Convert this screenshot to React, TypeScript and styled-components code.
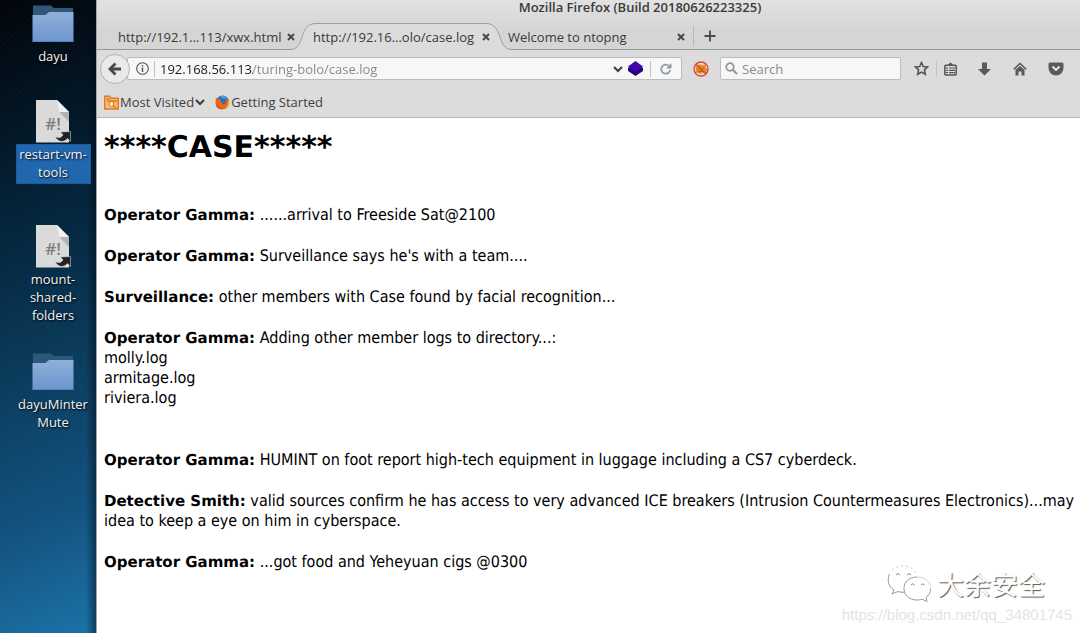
import React from "react";
import styled, { createGlobalStyle, css } from "styled-components";

const GlobalStyle = createGlobalStyle`
  * { box-sizing: border-box; }
  body { margin: 0; background: #fff; overflow: hidden; }
  button, input { font: inherit; color: inherit; }
  button { padding: 0; border: 0; background: none; }
  svg { display: block; flex: none; }
`;

const uiFont = `"Open Sans", "Noto Sans", sans-serif`;

const Screen = styled.div`
  display: grid;
  grid-template-columns: 96px minmax(0, 1fr);
  min-height: 100vh;
  font: 13px/18px ${uiFont};
`;

/* ---------- desktop ---------- */

const Desktop = styled.nav`
  display: grid;
  grid-template-rows: 98px;
  grid-auto-rows: 125px;
  justify-items: center;
  padding: 2px 0 0 10px;
  background:
    linear-gradient(90deg, transparent 86px, rgba(0, 10, 20, 0.5) 96px),
    repeating-linear-gradient(135deg, transparent 0 3px, rgba(255, 255, 255, 0.012) 3px 5px),
    linear-gradient(156deg, #01050a 0%, #021422 18%, #04263e 36%, #0b3e60 60%, #12527f 80%, #1b72a8 100%);
`;

const DesktopItem = styled.button`
  display: flex;
  flex-direction: column;
  align-items: center;
  align-self: start;
  gap: 1px;
  color: #f2f2f2;
`;

const IconSlot = styled.span`
  display: grid;
  place-items: center;
  height: 43px;
`;

const DesktopLabel = styled.span<{ $selected?: boolean }>`
  width: 75px;
  padding: 1px 0 3px;
  white-space: pre;
  text-align: center;
  display: flex;
  justify-content: center;
  text-shadow: 1px 1px 2px #000;
  ${(p) => p.$selected && css`
    background: #2067ae;
    box-shadow: inset 0 0 0 1px #1a5c9f;
  `}
`;

const FolderIcon = () => (
  <svg width="42" height="38" viewBox="0 0 42 38">
    <defs>
      <linearGradient id="folder" x1="0" y1="0" x2="0" y2="1">
        <stop offset="0" stopColor="#8fb0da" />
        <stop offset="1" stopColor="#6b96cd" />
      </linearGradient>
    </defs>
    <path d="M1 0.5h18l2.500 2.500H41V14H1z" fill="#2f5878" />
    <path d="M0.500 10h13l3.500-3H41.500V37H0.500z" fill="url(#folder)" />
    <path d="M0.500 36.500h41" stroke="#5783bb" />
  </svg>
);

const ScriptIcon = () => (
  <svg width="36" height="43" viewBox="0 0 36 43">
    <path d="M1 0h21l12 12v30.500H1z" fill="#dadada" />
    <path d="M22 0l12 12H24.500z" fill="#f2f2f2" />
    <path d="M24.500 12H34v10z" fill="#b2b2b2" />
    <text x="18" y="30" textAnchor="middle" fill="#7d7d7d" fontSize="17" fontWeight="600" fontFamily="Open Sans, sans-serif">#!</text>
    <path d="M20 36c3 2.500 6 2 8-1l-2.500-3 10-.5v10l-3-3c-4 4.500-10 4-12.500-2.500z" fill="#222" stroke="#e8e8e8" strokeWidth=".5" />
  </svg>
);

/* ---------- browser chrome ---------- */

const Browser = styled.main`
  display: flex;
  flex-direction: column;
  min-width: 0;
  overflow: hidden;
  border-left: 1px solid #9ea5ad;
  background: #fff;
`;

const WindowTop = styled.header`
  background: linear-gradient(#e2e2e2, #d5d5d5 30px);
  color: #3a3a3a;
`;

const TitleBar = styled.div`
  height: 23px;
  padding-left: 103px;
  text-align: center;
  font-weight: 600;
  line-height: 15px;
`;

const TabStrip = styled.div`
  display: flex;
  height: 27px;
  padding-left: 7px;
  border-bottom: 1px solid #999;
`;

const Tab = styled.div`
  position: relative;
  flex: 0 0 195px;
  height: 27px;
  display: flex;
  align-items: center;
  justify-content: space-between;
  padding: 0 3px 0 14px;
`;

const TabShape = styled.svg`
  position: absolute;
  left: -9px;
  top: 0;
`;

const TabName = styled.button`
  position: relative;
  white-space: nowrap;
`;

const TabClose = styled.button`
  position: relative;
  width: 10px;
  height: 18px;
  display: grid;
  place-items: center;
`;

const NewTab = styled.button`
  align-self: center;
  height: 20px;
  margin-left: 4px;
  padding-left: 10px;
  border-left: 1px solid #b9b9b9;
`;

const Toolbar = styled.div`
  display: flex;
  align-items: center;
  height: 37px;
  padding: 0 16px 0 3px;
  background: #dcdcdc;
  color: #555;
`;

const BackButton = styled.button`
  position: relative;
  width: 30px;
  height: 30px;
  flex: none;
  display: grid;
  place-items: center;
  border: 1px solid #b2b2b2;
  border-radius: 50%;
  background: #e9e9e9;
`;

const Field = styled.label<{ $grow?: boolean }>`
  display: flex;
  align-items: center;
  min-width: 0;
  height: 23px;
  border: 1px solid #bcbcbc;
  border-radius: 2px;
  background: #f7f7f7;
  ${(p) => p.$grow
    ? css`flex: 1; margin-left: -3px; padding: 0 5px 0 8px; gap: 5px;`
    : css`flex: 0 0 181px; padding: 0 4px; gap: 4px;`}
`;

const TextInput = styled.input`
  flex: 1;
  min-width: 0;
  height: 19px;
  padding: 0;
  border: 0;
  outline: 0;
  background: transparent;
  &::placeholder { color: #8c8c8c; opacity: 1; }
`;

/* The host part of the address is dark and the path is grey. */
const AddressInput = styled(TextInput)`
  background: linear-gradient(90deg, #1a1a1a 93px, #858585 93px);
  background-clip: text;
  -webkit-text-fill-color: transparent;
`;

const Divider = styled.span`
  width: 1px;
  height: 16px;
  flex: none;
  background: #c2c2c2;
`;

const IconButton = styled.button`
  display: grid;
  place-items: center;
  flex: none;
  height: 24px;
`;

const BlockerButton = styled(IconButton)`
  width: 38px;
`;

const Actions = styled.div`
  display: flex;
  align-items: center;
  justify-content: space-between;
  flex: 0 0 150px;
  margin-left: 13px;
`;

const ActionPair = styled.div`
  display: flex;
  align-items: center;
  gap: 7px;
`;

const Bookmarks = styled.div`
  display: flex;
  align-items: center;
  gap: 10px;
  height: 31px;
  padding: 0 7px;
  border-bottom: 1px solid #b8b8b8;
  background: #dcdcdc;
  color: #3e3e3e;
`;

const Bookmark = styled.button`
  display: flex;
  align-items: center;
  gap: 1px;
`;

const CloseGlyph = () => (
  <svg width="8" height="8" viewBox="0 0 8 8">
    <path d="M1 1l6 6M7 1L1 7" stroke="#484848" strokeWidth="2" />
  </svg>
);

const Chevron = () => (
  <svg width="10" height="10" viewBox="0 0 10 10">
    <path d="M1 3l4 4 4-4" fill="none" stroke="#3c3c3c" strokeWidth="2" />
  </svg>
);

const FirefoxIcon = () => (
  <svg width="15" height="15" viewBox="0 0 15 15">
    <circle cx="7.500" cy="7" r="6.500" fill="#2c6fb5" />
    <path d="M5 2c2-2 5-1.500 7 0l-3 2z" fill="#4aa3dc" />
    <path d="M.8 2.500L3 4l3 .3-1 2 3 1-1.500 1.500c1.500 1.500 4 .5 4.500-1.500.5-2-.5-3.500-1-4.500 3 1 4.500 4 4.500 5.500C14 12 11 14.500 7.500 14.500S.5 12 .5 8c0-2 .3-4 .3-5.500z" fill="#e9661a" />
    <path d="M14.300 6c.5 5-2.800 8.500-6.800 8.500 4-1 6-4 5.500-8.500z" fill="#fbbf2d" />
    <path d="M1.500 9c1 3 3 4.500 6 5-4 .5-6.500-2-6-5z" fill="#c63718" />
  </svg>
);

/* ---------- page ---------- */

const Page = styled.article`
  position: relative;
  flex: 1;
  padding: 12px 0 24px 7px;
  overflow: hidden;
  background: #fff;
  color: #000;
  font: 16px/20px "DejaVu Sans Condensed", "DejaVu Sans", sans-serif;
  text-rendering: geometricPrecision;
`;

const Heading = styled.h1`
  margin: 0 0 39px;
  font: 700 30px/36px "DejaVu Sans", sans-serif;
`;

const Entry = styled.div<{ $spaced?: boolean }>`
  margin: 0 0 ${(p) => (p.$spaced ? 42 : 21)}px;
`;

const Line = styled.p`
  height: 20px;
  margin: 0;
  white-space: nowrap;
`;

const Speaker = styled.b`
  font: 700 15px/20px "DejaVu Sans", sans-serif;
`;

const Watermark = styled.aside`
  position: absolute;
  right: 8px;
  bottom: 6px;
  display: flex;
  flex-direction: column;
  align-items: flex-end;
  color: #e4e4e4;
  font: 15px/22px "Liberation Sans", sans-serif;
`;

const Brand = styled.div`
  display: flex;
  align-items: center;
  gap: 6px;
  height: 42px;
  padding-right: 27px;
  color: #fff;
  font: 27px/36px "Noto Sans CJK SC", sans-serif;
  text-shadow: 1px 1px 1px #555;
`;

const entries = [
  { who: "Operator Gamma:", lines: ["......arrival to Freeside Sat@2100"] },
  { who: "Operator Gamma:", lines: ["Surveillance says he's with a team...."] },
  { who: "Surveillance:", lines: ["other members with Case found by facial recognition..."] },
  {
    who: "Operator Gamma:",
    lines: ["Adding other member logs to directory...:", "molly.log", "armitage.log", "riviera.log"],
    spaced: true,
  },
  { who: "Operator Gamma:", lines: ["HUMINT on foot report high-tech equipment in luggage including a CS7 cyberdeck."] },
  {
    who: "Detective Smith:",
    lines: [
      "valid sources confirm he has access to very advanced ICE breakers (Intrusion Countermeasures Electronics)...may",
      "idea to keep a eye on him in cyberspace.",
    ],
  },
  { who: "Operator Gamma:", lines: ["...got food and Yeheyuan cigs @0300"] },
];

const desktopItems = [
  { label: "dayu", folder: true },
  { label: "restart-vm-\ntools", selected: true },
  { label: "mount-\nshared-\nfolders" },
  { label: "dayuMinter\nMute", folder: true },
];

const tabs = [
  { name: "http://192.1…113/xwx.html" },
  { name: "http://192.16…olo/case.log", active: true },
  { name: "Welcome to ntopng" },
];

export default function App() {
  return (
    <Screen>
      <GlobalStyle />
      <Desktop aria-label="Desktop">
        {desktopItems.map((item) => (
          <DesktopItem key={item.label}>
            <IconSlot>{item.folder ? <FolderIcon /> : <ScriptIcon />}</IconSlot>
            <DesktopLabel $selected={item.selected}>{item.label}</DesktopLabel>
          </DesktopItem>
        ))}
      </Desktop>

      <Browser>
        <WindowTop>
          <TitleBar>Mozilla Firefox (Build 20180626223325)</TitleBar>
          <TabStrip>
            {tabs.map((tab) => (
              <Tab key={tab.name}>
                {tab.active && (
                  <TabShape width="226" height="27" viewBox="0 0 226 27">
                    <path d="M0 27V26.500C16 26.500 8 .5 26 .5H196C214 .5 206 26.500 222 26.500V27z" fill="#dcdcdc" />
                    <path d="M0 26.500C16 26.500 8 .5 26 .5H196C214 .5 206 26.500 222 26.500" fill="none" stroke="#999fa6" />
                  </TabShape>
                )}
                <TabName>{tab.name}</TabName>
                <TabClose aria-label="Close tab"><CloseGlyph /></TabClose>
              </Tab>
            ))}
            <NewTab aria-label="New tab">
              <svg width="12" height="12" viewBox="0 0 12 12">
                <path d="M6 0.500v11M0.500 6h11" stroke="#4a4a4a" strokeWidth="1.800" />
              </svg>
            </NewTab>
          </TabStrip>
        </WindowTop>

        <Toolbar>
          <BackButton aria-label="Back">
            <svg width="14" height="14" viewBox="0 0 14 14">
              <path d="M7.500 1.500L2 7l5.500 5.500M2.500 7H13" fill="none" stroke="#484848" strokeWidth="2.800" />
            </svg>
          </BackButton>
          <Field $grow>
            <svg width="13" height="13" viewBox="0 0 13 13">
              <circle cx="6.500" cy="6.500" r="5.800" fill="none" stroke="#555" strokeWidth="1.100" />
              <path d="M6.500 3v1.600M6.500 5.600v4.400" stroke="#555" strokeWidth="1.500" />
            </svg>
            <Divider />
            <AddressInput aria-label="Address" defaultValue="192.168.56.113/turing-bolo/case.log" />
            <Chevron />
            <svg width="17" height="15" viewBox="0 0 17 15">
              <path d="M7.500 2.500L15 7v3l-7.500 5L0 10V7z" fill="#25067a" />
              <path d="M7.500 0L15 5.500 7.500 11 0 5.500z" fill="#4405ad" />
            </svg>
            <Divider />
            <IconButton aria-label="Reload">
              <svg width="20" height="12" viewBox="0 0 20 12">
                <path d="M13 3a4.500 4.500 0 1 0 1.200 4" fill="none" stroke="#929ba5" strokeWidth="1.800" />
                <path d="M15.500 0v5.500H10z" fill="#929ba5" />
              </svg>
            </IconButton>
          </Field>
          <BlockerButton aria-label="Blocker">
            <svg width="16" height="16" viewBox="0 0 16 16">
              <path d="M2 4l3 1 2-2 2 1.500 4-1.500-.5 4 2 1-2 4-3-.5-2 1.500-3-1.500-2 .5.500-4z" fill="#ec8a12" />
              <path d="M5 9l2-2 2 1.500 2-2M5 11l3-1 3 1" fill="none" stroke="#a75b18" />
              <circle cx="8" cy="8" r="7" fill="none" stroke="#d9453f" strokeWidth="1.300" />
              <path d="M3 3l10 10" stroke="#d9453f" strokeWidth="1.300" />
            </svg>
          </BlockerButton>
          <Field>
            <svg width="13" height="13" viewBox="0 0 13 13">
              <circle cx="5" cy="5" r="3.800" fill="none" stroke="#959595" strokeWidth="1.700" />
              <path d="M8 8l4 4" stroke="#959595" strokeWidth="2.200" />
            </svg>
            <TextInput aria-label="Search" placeholder="Search" />
          </Field>
          <Actions>
            <ActionPair>
              <IconButton aria-label="Bookmark this page">
                <svg width="15" height="15" viewBox="0 0 15 15">
                  <path d="M7.500 1.500l1.800 4 4.300.5-3.200 2.900.9 4.400-3.800-2.200-3.800 2.200.9-4.400L1.400 6l4.300-.5z" fill="none" stroke="#555" strokeWidth="1.600" />
                </svg>
              </IconButton>
              <Divider />
              <IconButton aria-label="Library">
                <svg width="13" height="14" viewBox="0 0 13 14">
                  <path d="M3.500 3.500L6.500.3l3 3.200z" fill="#555" />
                  <rect x=".8" y="3.300" width="11.400" height="9.700" rx="1" fill="none" stroke="#555" strokeWidth="1.500" />
                  <path d="M2 6h2M5 6h6M2 8.300h2M5 8.300h6M2 10.600h2M5 10.600h6" stroke="#555" strokeWidth="1.200" />
                </svg>
              </IconButton>
            </ActionPair>
            <IconButton aria-label="Downloads">
              <svg width="13" height="14" viewBox="0 0 13 14">
                <path d="M4 .5h5V7h4l-6.500 6.500L0 7h4z" fill="#5a5a5a" />
              </svg>
            </IconButton>
            <IconButton aria-label="Home">
              <svg width="14" height="14" viewBox="0 0 14 14">
                <path d="M.8 7.300L7 1.500l6.200 5.800" fill="none" stroke="#5a5a5a" strokeWidth="1.600" />
                <path d="M2.500 8L7 4l4.500 4v5.500H8.500V9.500h-3v4h-3z" fill="#5a5a5a" />
              </svg>
            </IconButton>
            <IconButton aria-label="Pocket">
              <svg width="16" height="14" viewBox="0 0 16 14">
                <path d="M2 .5h12q1.500 0 1.500 1.500v4a7.500 7.500 0 0 1-15 0V2Q.5.5 2 .5z" fill="#5a5a5a" />
                <path d="M4.500 4.500L8 8l3.500-3.500" fill="none" stroke="#eee" strokeWidth="1.800" />
              </svg>
            </IconButton>
          </Actions>
        </Toolbar>

        <Bookmarks>
          <Bookmark>
            <svg width="15" height="15" viewBox="0 0 15 15">
              <path d="M.7 14V1.200h5l1.300 2h7.300V14z" fill="#f4bc7f" stroke="#e07a1e" strokeWidth="1.400" />
              <path d="M2 3.800h4M3 6h10.500" stroke="#e07a1e" strokeWidth="1.300" />
              <circle cx="7.500" cy="9" r="2.300" fill="#fff0dc" stroke="#e07a1e" />
              <path d="M9 10.500l3 2.500" stroke="#e07a1e" strokeWidth="1.500" />
            </svg>
            <span>Most Visited</span>
            <Chevron />
          </Bookmark>
          <Bookmark>
            <FirefoxIcon />
            <span>Getting Started</span>
          </Bookmark>
        </Bookmarks>

        <Page>
          <Heading>****CASE*****</Heading>
          {entries.map(({ who, lines, spaced }) => (
            <Entry key={lines[0]} $spaced={spaced}>
              {lines.map((line, i) => (
                <Line key={line}>
                  {i === 0 && <><Speaker>{who}</Speaker> </>}
                  {line}
                </Line>
              ))}
            </Entry>
          ))}
          <Watermark>
            <Brand>
              <svg width="44" height="38" viewBox="0 0 44 38">
                <g fill="#fff" stroke="#909090" strokeWidth=".9">
                  <path d="M16 1C7 1 1 7 1 14c0 5 2 8 6 11l-2 4 6-2.500c3 1 7 1 9 .5" stroke="none" />
                  <path d="M2.500 9C-.5 16 2 22 7 25l-2 4 6-2.500c2 .7 4 .9 6 .8" />
                  <path d="M5 5C12-1 24-1 29 8" strokeDasharray="2 3" stroke="#c4c4c4" fill="none" />
                  <path d="M30 12c-8 0-13 5-13 11.500S22 35 30 35c2 0 4-.3 5-.8l5 2.300-1-4c3-2 4.500-5 4.500-9" />
                  <path d="M30 12c6 0 12 3 13.500 9" stroke="#d0d0d0" />
                  <path d="M9 10q2-3 4 0M20 10q2-3 4 0M24 20q1.500-2.500 3.500 0M34 20q1.500-2.500 3.500 0" fill="none" stroke="#777" />
                </g>
              </svg>
              <span>大余安全</span>
            </Brand>
            <span>https://blog.csdn.net/qq_34801745</span>
          </Watermark>
        </Page>
      </Browser>
    </Screen>
  );
}
